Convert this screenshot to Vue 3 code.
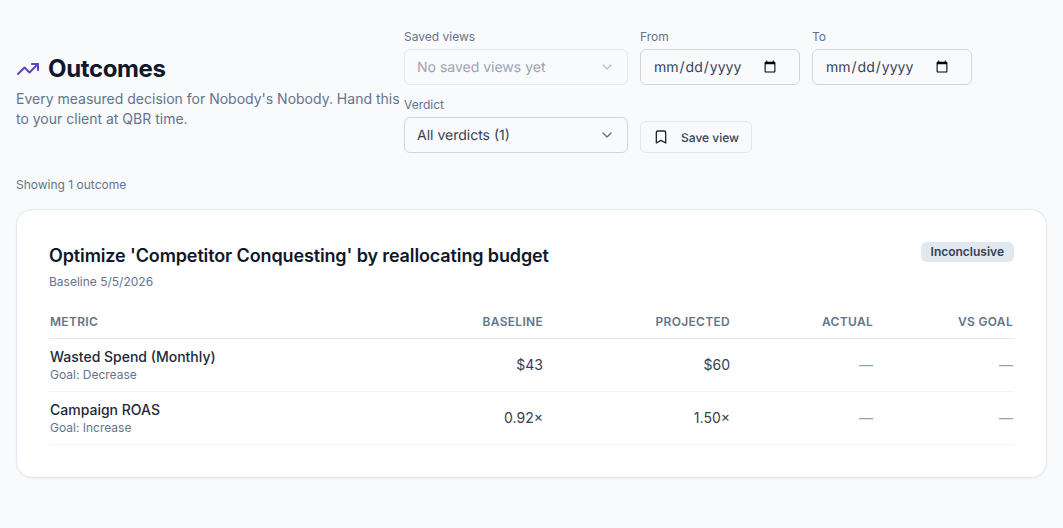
<template>
  <div class="page">
    <header class="top">
      <div class="intro">
        <h1 class="title">
          <svg class="trend" width="24" height="24" viewBox="0 0 24 24" fill="none">
            <polyline points="22 7 13.5 15.5 8.5 10.5 2 17" />
            <polyline points="16 7 22 7 22 13" />
          </svg>
          Outcomes
        </h1>
        <p class="subtitle">Every measured decision for Nobody's Nobody. Hand this to your client at QBR time.</p>
      </div>

      <div class="filters">
        <div class="field">
          <label>Saved views</label>
          <div class="select-wrap">
            <select class="control select" disabled>
              <option>No saved views yet</option>
            </select>
            <svg class="chevron muted" width="16" height="16" viewBox="0 0 24 24" fill="none"><path d="m6 9 6 6 6-6" /></svg>
          </div>
        </div>
        <div class="field">
          <label>From</label>
          <input class="control date" type="date" />
        </div>
        <div class="field">
          <label>To</label>
          <input class="control date" type="date" />
        </div>
        <div class="field">
          <label>Verdict</label>
          <div class="select-wrap">
            <select class="control select">
              <option>All verdicts (1)</option>
            </select>
            <svg class="chevron" width="16" height="16" viewBox="0 0 24 24" fill="none"><path d="m6 9 6 6 6-6" /></svg>
          </div>
        </div>
        <button class="save">
          <svg width="16" height="16" viewBox="0 0 24 24" fill="none"><path d="m19 21-7-4-7 4V5a2 2 0 0 1 2-2h10a2 2 0 0 1 2 2v16z" /></svg>
          Save view
        </button>
      </div>
    </header>

    <p class="count">Showing 1 outcome</p>

    <section class="card">
      <div class="card-head">
        <div>
          <h2>Optimize 'Competitor Conquesting' by reallocating budget</h2>
          <p class="date-line">Baseline 5/5/2026</p>
        </div>
        <span class="badge">Inconclusive</span>
      </div>

      <table>
        <colgroup>
          <col class="c-metric" />
          <col class="c-base" />
          <col class="c-proj" />
          <col class="c-actual" />
          <col />
        </colgroup>
        <thead>
          <tr>
            <th class="left">Metric</th>
            <th>Baseline</th>
            <th>Projected</th>
            <th>Actual</th>
            <th>vs Goal</th>
          </tr>
        </thead>
        <tbody>
          <tr v-for="row in rows" :key="row.name">
            <td class="left">
              <div class="name">{{ row.name }}</div>
              <div class="goal">{{ row.goal }}</div>
            </td>
            <td>{{ row.baseline }}</td>
            <td>{{ row.projected }}</td>
            <td class="dash">—</td>
            <td class="dash">—</td>
          </tr>
        </tbody>
      </table>
    </section>
  </div>
</template>

<script setup>
const rows = [
  { name: 'Wasted Spend (Monthly)', goal: 'Goal: Decrease', baseline: '$43', projected: '$60' },
  { name: 'Campaign ROAS', goal: 'Goal: Increase', baseline: '0.92×', projected: '1.50×' }
]
</script>

<style>
html, body {
  margin: 0;
  background: #f9fafc;
}
</style>

<style scoped>
.page {
  min-height: 528px;
  box-sizing: border-box;
  padding: 29px 16px 0;
  background: #f9fafc;
  font-family: Inter, "Liberation Sans", sans-serif;
  color: #0f172a;
}

.top {
  display: flex;
  align-items: center;
}

.intro {
  width: 388px;
  flex: none;
}

.title {
  display: flex;
  align-items: center;
  gap: 8px;
  margin: 0;
  font-size: 24px;
  line-height: 32px;
  font-weight: 700;
  letter-spacing: -0.36px;
  color: #0f172a;
}

.trend {
  stroke: #5b46c4;
  stroke-width: 2;
  stroke-linecap: round;
  stroke-linejoin: round;
}

.subtitle {
  margin: 4px 0 0;
  font-size: 14px;
  line-height: 20px;
  color: #64748b;
}

.filters {
  display: flex;
  flex-wrap: wrap;
  align-items: flex-end;
  gap: 12px;
  width: 600px;
}

.field label {
  display: block;
  margin-bottom: 4px;
  font-size: 12px;
  line-height: 16px;
  color: #64748b;
}

.select-wrap {
  position: relative;
  width: 224px;
}

.control {
  display: block;
  box-sizing: border-box;
  height: 36px;
  padding: 0 12px;
  border: 1px solid #d1d5db;
  border-radius: 6px;
  background: #f9fafc;
  font-family: inherit;
  font-size: 14px;
  color: #374151;
  text-rendering: geometricPrecision;
}

.select {
  width: 100%;
  appearance: none;
}

.select:disabled {
  border-color: #e5e7eb;
  color: #9ca3af;
  opacity: 1;
}

.date {
  width: 160px;
  padding-right: 20px;
}

.chevron {
  position: absolute;
  top: 10px;
  right: 13px;
  stroke: #6b7280;
  stroke-width: 2;
  stroke-linecap: round;
  stroke-linejoin: round;
  pointer-events: none;
}

.chevron.muted {
  stroke: #b9bfc9;
}

.save {
  display: flex;
  align-items: center;
  gap: 12px;
  box-sizing: border-box;
  width: 112px;
  height: 32px;
  padding: 0 12px;
  border: 1px solid #e2e5ea;
  border-radius: 6px;
  background: #f9fafc;
  font-family: inherit;
  font-size: 12px;
  font-weight: 500;
  color: #374151;
  text-rendering: geometricPrecision;
}

.save svg {
  flex: none;
  stroke: #1f2937;
  stroke-width: 2;
  stroke-linecap: round;
  stroke-linejoin: round;
}

.count {
  margin: 24px 0 16px;
  font-size: 12px;
  line-height: 16px;
  color: #64748b;
}

.card {
  padding: 32px;
  border: 1px solid #e2e8f0;
  border-radius: 16px;
  background: #fff;
  box-shadow: 0 1px 2px rgba(15, 23, 42, 0.05);
}

.card-head {
  display: flex;
  justify-content: space-between;
  align-items: flex-start;
}

.card-head h2 {
  margin: 0;
  font-size: 18px;
  line-height: 28px;
  font-weight: 600;
  letter-spacing: -0.125px;
  color: #0f172a;
}

.date-line {
  margin: 4px 0 0;
  font-size: 12px;
  line-height: 16px;
  color: #64748b;
}

.badge {
  padding: 2px 10px;
  border-radius: 6px;
  background: #e2e8f0;
  font-size: 12px;
  line-height: 16px;
  font-weight: 600;
  color: #334155;
}

table {
  width: 100%;
  margin-top: 16px;
  border-collapse: collapse;
  table-layout: fixed;
}

.c-metric { width: 395px; }
.c-base { width: 100px; }
.c-proj { width: 187px; }
.c-actual { width: 143px; }

th {
  height: 32px;
  box-sizing: border-box;
  padding: 0 1px 0 0;
  border-bottom: 1px solid #e2e8f0;
  text-align: right;
  font-size: 12px;
  line-height: 16px;
  font-weight: 600;
  letter-spacing: 0.3px;
  text-transform: uppercase;
  color: #64748b;
}

td {
  height: 53px;
  box-sizing: border-box;
  padding: 0 1px 0 0;
  border-bottom: 1px solid #f1f5f9;
  text-align: right;
  font-size: 14px;
  line-height: 20px;
  color: #334155;
}

.left {
  padding-left: 1px;
  text-align: left;
}

.name {
  font-weight: 500;
  color: #1e293b;
}

.goal {
  font-size: 12px;
  line-height: 16px;
  color: #64748b;
}

td.dash {
  color: #94a3b8;
}
</style>
